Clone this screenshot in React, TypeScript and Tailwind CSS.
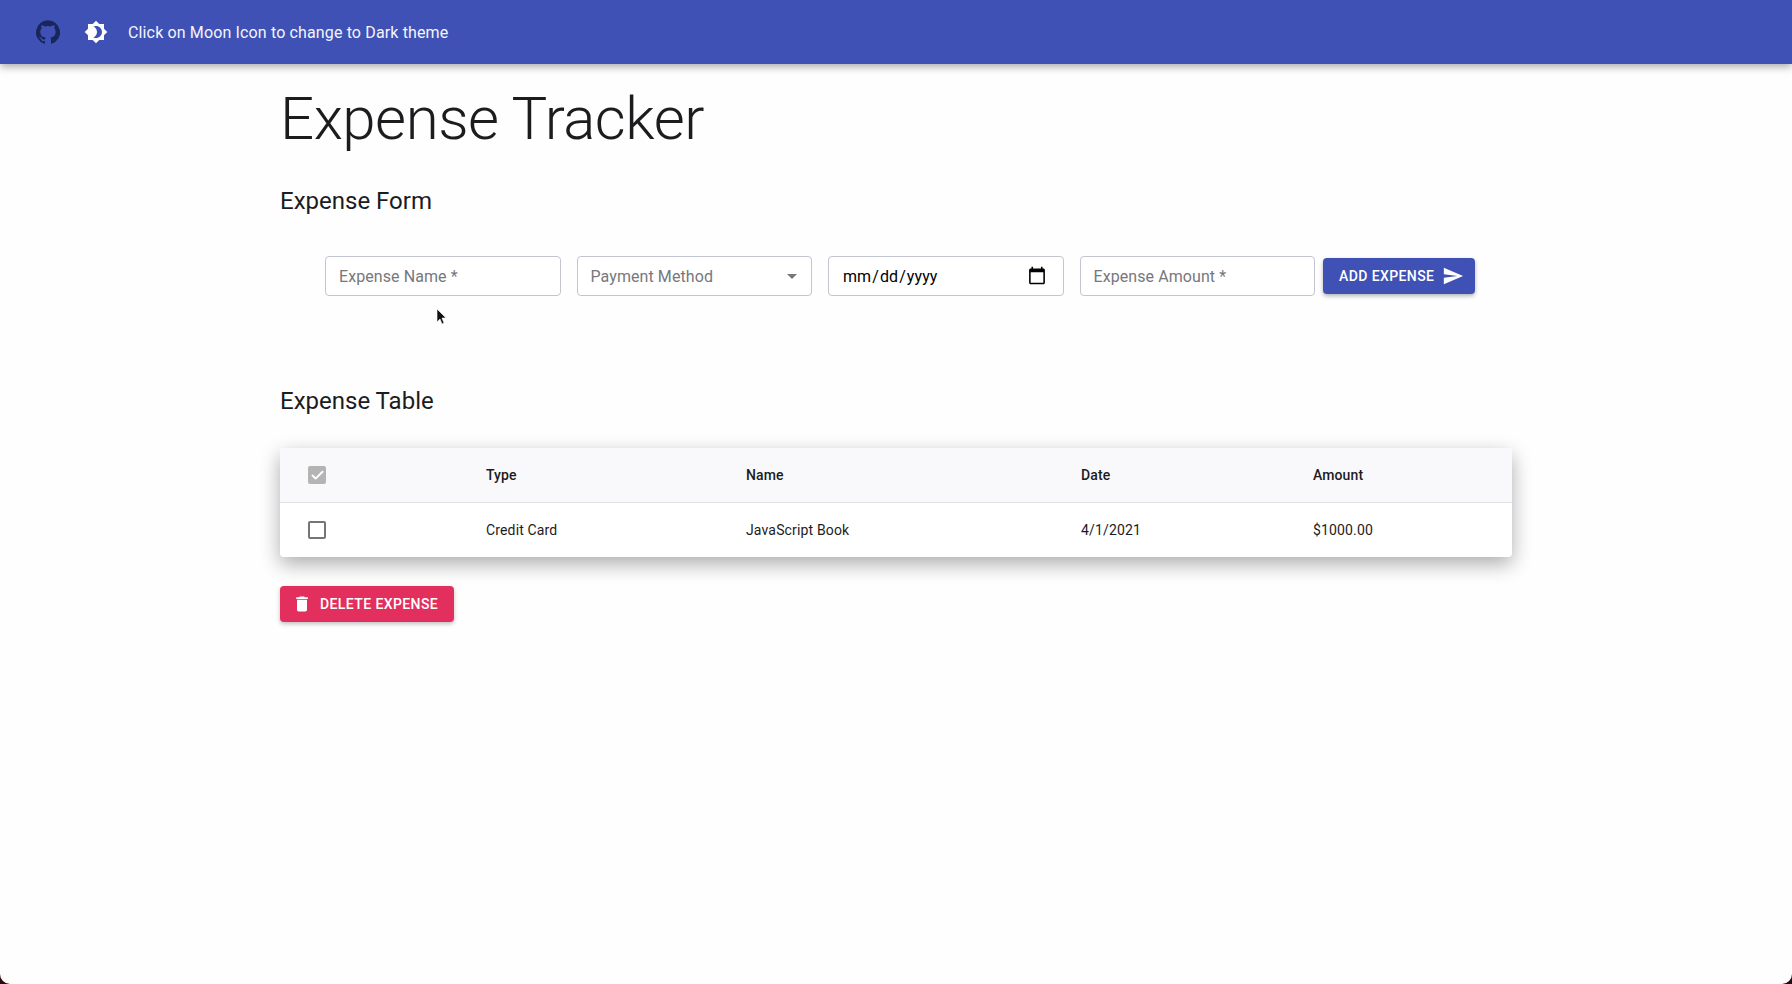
import { Check } from 'lucide-react';

const boxClass = 'h-10 w-[235.5px] rounded-[4px] border border-[#c4c4d0] bg-white px-[13px] text-base tracking-[0.08px] outline-none';
const fieldClass = `${boxClass} text-black placeholder:text-[#77777c]`;

const columns = 'grid grid-cols-[206px_260px_335px_232px_1fr] items-center';

function GithubIcon() {
  return (
    <svg viewBox="0 0 24 24" className="h-6 w-6 fill-[#17275c]">
      <path d="M12 .3a12 12 0 0 0-3.8 23.4c.6.1.8-.3.8-.6v-2c-3.3.7-4-1.6-4-1.6-.6-1.4-1.4-1.8-1.4-1.8-1-.7.1-.7.1-.7 1.2 0 1.9 1.2 1.9 1.2 1 1.8 2.8 1.3 3.5 1 0-.8.4-1.3.7-1.6-2.7-.3-5.5-1.3-5.5-6 0-1.2.5-2.3 1.3-3.1-.2-.4-.6-1.6 0-3.2 0 0 1-.3 3.4 1.2a11.5 11.5 0 0 1 6 0c2.3-1.5 3.3-1.2 3.3-1.2.6 1.6.2 2.8 0 3.2.9.8 1.3 1.9 1.3 3.2 0 4.6-2.8 5.6-5.5 5.9.5.4.9 1 .9 2.2v3.3c0 .3.1.7.8.6A12 12 0 0 0 12 .3" />
    </svg>
  );
}

function ThemeIcon() {
  return (
    <svg viewBox="0 0 24 24" className="h-6 w-6 fill-white">
      <path d="M20 8.69V4h-4.69L12 .69 8.69 4H4v4.69L.69 12 4 15.31V20h4.69L12 23.31 15.31 20H20v-4.69L23.31 12 20 8.69zM12 18c-.89 0-1.74-.2-2.5-.55C11.56 16.5 13 14.42 13 12s-1.44-4.5-3.5-5.45C10.26 6.2 11.11 6 12 6c3.31 0 6 2.69 6 6s-2.69 6-6 6z" />
    </svg>
  );
}

function SendIcon() {
  return (
    <svg viewBox="0 0 24 24" className="h-[22px] w-[22px] fill-white">
      <path d="M2.01 21 23 12 2.01 3 2 10l15 2-15 2z" />
    </svg>
  );
}

function TrashIcon() {
  return (
    <svg viewBox="0 0 24 24" className="h-5 w-5 fill-white">
      <path d="M6 19c0 1.1.9 2 2 2h8c1.1 0 2-.9 2-2V7H6v12zM19 4h-3.5l-1-1h-5l-1 1H5v2h14V4z" />
    </svg>
  );
}

function Field({ placeholder }: { placeholder: string }) {
  return <input type="text" placeholder={placeholder} className={fieldClass} />;
}

export default function App() {
  return (
    <div
      className="relative h-[984px] overflow-hidden bg-[#fefefe] text-[#1c1c1e]"
      style={{ fontFamily: 'Roboto, sans-serif' }}
    >
      <header className="flex h-16 items-center bg-[#3f51b5] pl-9 shadow-[0_3px_8px_rgba(0,0,0,0.32)]">
        <GithubIcon />
        <div className="ml-6">
          <ThemeIcon />
        </div>
        <span className="mt-px ml-5 text-base tracking-[0.14px] text-[#f4f5fb]">Click on Moon Icon to change to Dark theme</span>
      </header>

      <main className="ml-[280px] w-[1232px]">
        <h1 className="mt-[19px] text-[60px] leading-[72px] font-light tracking-[-0.5px]">Expense Tracker</h1>
        <h2 className="mt-[30px] text-2xl leading-8">Expense Form</h2>

        <form className="mt-[39px] flex items-center pl-[45px]">
          <Field placeholder="Expense Name *" />
          <div className="relative ml-4">
            <div className={`${boxClass} flex items-center pt-px text-[#77777c]`}>Payment Method</div>
            <svg viewBox="0 0 24 24" className="absolute top-[8px] right-[8px] h-6 w-6 fill-[#77777c]">
              <path d="M7 10l5 5 5-5z" />
            </svg>
          </div>
          <input
            type="date"
            className={`${fieldClass} ml-4 pt-[2px] [&::-webkit-calendar-picker-indicator]:-mt-[3px] [&::-webkit-calendar-picker-indicator]:mr-px [&::-webkit-calendar-picker-indicator]:h-5 [&::-webkit-calendar-picker-indicator]:w-5`}
          />
          <input type="text" placeholder="Expense Amount *" className={`${fieldClass} ml-4`} />
          <button
            type="button"
            className="ml-2 flex h-9 w-[152px] items-center gap-2 rounded-[4px] bg-[#3f51b5] pl-4 text-sm font-medium tracking-[0.4px] text-white shadow-[0_2px_4px_rgba(0,0,0,0.3)]"
          >
            ADD EXPENSE
            <SendIcon />
          </button>
        </form>

        <h2 className="mt-[89px] text-2xl leading-8">Expense Table</h2>

        <div className="mt-[31px] overflow-hidden rounded-[4px] bg-white text-sm shadow-[0_7px_20px_rgba(0,0,0,0.33)]">
          <div className={`${columns} h-[55px] border-b border-[#e0e0e6] bg-[#f9f9fb] font-medium tracking-[0.1px]`}>
            <div className="pl-7">
              <div className="flex h-[18px] w-[18px] items-center justify-center rounded-[2px] bg-[#b4b4b4]">
                <Check size={15} strokeWidth={3} className="text-white" />
              </div>
            </div>
            <div>Type</div>
            <div>Name</div>
            <div>Date</div>
            <div>Amount</div>
          </div>
          <div className={`${columns} h-[54px] tracking-[0.15px]`}>
            <div className="pl-7">
              <div className="h-[18px] w-[18px] rounded-[2px] border-2 border-[#757575]" />
            </div>
            <div>Credit Card</div>
            <div>JavaScript Book</div>
            <div>4/1/2021</div>
            <div>$1000.00</div>
          </div>
        </div>

        <button
          type="button"
          className="mt-[29px] flex h-9 w-[174px] items-center gap-2 rounded-[4px] bg-[#e32f5e] pl-3 text-sm font-medium tracking-[0.4px] text-white shadow-[0_2px_4px_rgba(0,0,0,0.25)]"
        >
          <TrashIcon />
          DELETE EXPENSE
        </button>
      </main>

      {/* mouse pointer caught in the capture */}
      <svg viewBox="0 0 12 18" className="absolute top-[308px] left-[436px] h-[18px] w-3">
        <path d="M1 1v13l3-3 2 5 2-1-2-5h4z" fill="#111" stroke="#fff" strokeWidth="0.6" />
      </svg>

      {/* rounded window corners of the capture */}
      <svg viewBox="0 0 10 10" className="absolute bottom-0 left-0 h-2.5 w-2.5">
        <path d="M0 0a10 10 0 0 0 10 10H0z" fill="#2a0a10" />
      </svg>
      <svg viewBox="0 0 10 10" className="absolute right-0 bottom-0 h-2.5 w-2.5">
        <path d="M10 0a10 10 0 0 1-10 10h10z" fill="#2a0a10" />
      </svg>
    </div>
  );
}
